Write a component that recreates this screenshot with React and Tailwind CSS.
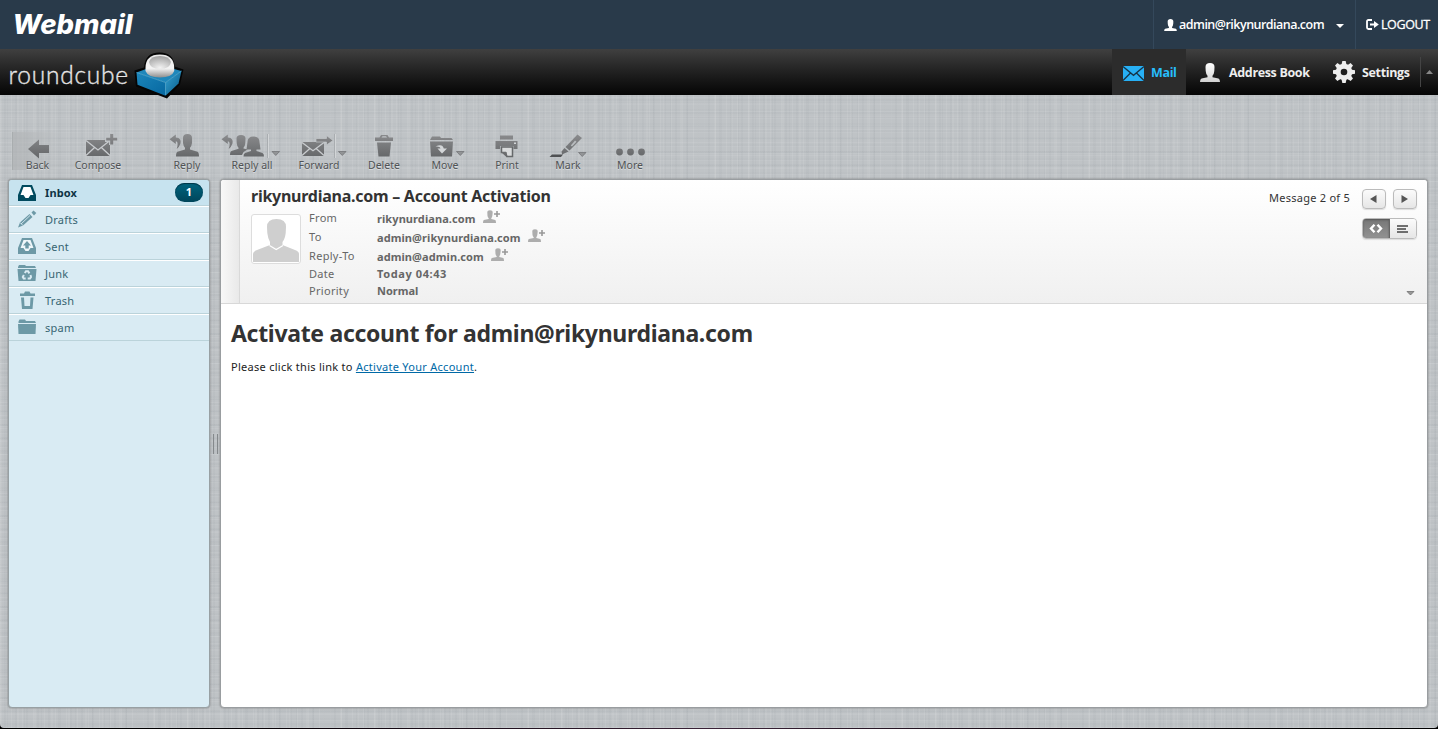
import React from "react";

const Glyph = ({ x, y, w, h, children, className = "" }) => (
  <svg width={w} height={h} viewBox={`${x} ${y} ${w} ${h}`} className={`block shrink-0 overflow-visible ${className}`}>
    {children}
  </svg>
);

const Caret = ({ x, y = 151 }) => (
  <path d={`M${x} ${y + 0.5}h7.500l-3.750 4z`} fill="#929496" stroke="#6d6f71" strokeWidth=".7" />
);

const Divider = ({ x }) => (
  <g>
    <path d={`M${x} 134v24`} stroke="#a9adb0" strokeWidth="1" />
    <path d={`M${x + 1} 134v24`} stroke="#d2d5d7" strokeWidth="1" />
  </g>
);

const Envelope = ({ x, y, w, h, line = "#c9cccf" }) => (
  <g>
    <rect x={x} y={y} width={w} height={h} />
    <path
      d={`M${x} ${y + 0.5}L${x + w / 2} ${y + h * 0.62}L${x + w} ${y + 0.5}M${x} ${y + h - 0.5}L${x + w * 0.37} ${y + h * 0.45}M${x + w} ${y + h - 0.5}L${x + w * 0.63} ${y + h * 0.45}`}
      fill="none" stroke={line} strokeWidth="1.3"
    />
  </g>
);

const ReplyArrow = ({ x }) => (
  <path transform={`translate(${x} 0)`} d="M0 139.3L6.3 134.5V137.6C10.5 137.8 12 140.5 10.8 144Q10 146.5 7.2 149C8.6 145 8.6 141.3 6.3 141.2V144z" />
);

const tools = [
  { label: "Back", x: 12, cls: "w-[50px]", w: 50, art: <path d="M28 149L39 139.5V145H49V153H39V158.500z" /> },
  {
    label: "Compose", x: 62, cls: "w-[72px]", w: 72,
    art: <g><Envelope x={86} y={140} w={24} h={16} /><path d="M105 136H109V133H114.500V136H118.500V142H114.500V145H109V142H105z" fill="#c0c4c7" /><path d="M110.200 134h3v3.700h4v2.800h-4v4h-3v-4h-4v-2.800h4z" /></g>,
  },
  {
    label: "Reply", x: 159, cls: "ml-[25px] w-[56px]", w: 56,
    art: <g><ReplyArrow x={169.5} /><path d="M183 138Q183 134 187.500 134T192 138L192 143Q191.500 146.500 190 147.800V149.500L197.500 151.800Q199 152.500 199 156.500H176Q176 152.500 177.500 151.800L185 149.500V147.800Q183.500 146.500 183 143z" /></g>,
  },
  {
    label: "Reply all", x: 215, cls: "w-[74px]", w: 74,
    art: <g><ReplyArrow x={221.5} /><path d="M236.500 138.500Q236.500 135 241 135T245.500 138.500L245.300 143Q245 146.500 243.500 147.800V148.500L247.500 149.500L243.500 152L242 155H230Q230 151.500 231.500 151L238.500 148.800V147.800Q237 146.500 236.700 143z" /><path d="M247.500 142Q247.500 136.500 253.500 136.500T259.500 142L260.500 149.500H256.500V151L262.500 153Q264 153.500 264 156.500H243.500Q243.500 153.500 245 153L251 151V149.500H246.500z" /><Divider x={267.5} /><Caret x={272} /></g>,
  },
  {
    label: "Forward", x: 289, cls: "w-[60px]", w: 60,
    art: <g><Envelope x={302} y={142} w={22} h={14} /><path d="M316 138.500H326.500V135.500L333 140.500L326.500 145V142H316z" stroke="#c3c7ca" strokeWidth=".7" /><Divider x={334.5} /><Caret x={338.500} /></g>,
  },
  {
    label: "Delete", x: 349, cls: "w-[70px]", w: 70,
    art: <g><path d="M375 137.500H379.500L381 135H387.500L389 137.500H393V141H375z" /><path d="M381.500 137.500L382.500 136.200H386L387 137.500z" fill="#c2c6c9" /><path d="M377 142.500H391L389.500 156.500H378.500z" /></g>,
  },
  {
    label: "Move", x: 419, cls: "w-[52px]", w: 52,
    art: <g><path d="M430 140L432 136.500H440L441 138H451.500L453 140z" /><path d="M430 141.500H453L452 156.500H431z" /><path d="M435.500 146.500Q442.500 143 443.800 148.500H447L442 153.500L437.500 148.500H440.500Q440 146 435.500 146.500z" fill="#d3d6d8" /><Caret x={456.500} /></g>,
  },
  {
    label: "Print", x: 471, cls: "w-[72px]", w: 72,
    art: <g><path d="M500 135.500H513V139.500H500z" /><path d="M495.500 141H517.500V149H513.500V146H500V149H495.500z" /><path d="M501.500 147H512.500V156.500H507L505.500 152.500H501.500z" fill="#d9dbdc" stroke="#66686a" strokeWidth="1.500" /><path d="M501 152L507 157.500L506.500 152z" /><path d="M514 142.500h2v1.500h-2z" fill="#d2d5d7" /></g>,
  },
  {
    label: "Mark", x: 543, cls: "w-[50px]", w: 50,
    art: <g><path d="M577.500 134.500L582 138L569.500 150.500L565.500 147z" /><path d="M575 140.500l1.500 1.200-4.500 4.800-1.200-1z" fill="#b9bdc0" /><path d="M564.500 148L568.500 151.500L562 154.500L561.500 151.500z" /><path d="M552 154.500H563L561 157H549.500z" fill="#4f5153" /><Caret x={578.500} y={152} /></g>,
  },
  { label: "More", x: 593, cls: "w-[74px]", w: 74, art: <g><circle cx="619.500" cy="152" r="3.400" /><circle cx="630.500" cy="152" r="3.400" /><circle cx="641.500" cy="152" r="3.400" /></g> },
];

function Toolbar() {
  return (
    <div className="flex h-[84px] pt-[37px] pl-3">
      {tools.map((t) => (
        <div key={t.label} className={`flex shrink-0 flex-col items-center ${t.cls} ${t.label === "Back" ? "h-[38px] border-l border-[#a9adaf] bg-linear-to-r from-[#b0b3b5]/70 to-transparent" : ""}`}>
          <Glyph x={t.x} y={132} w={t.w} h={26} className={t.label === "Back" ? "-ml-px" : ""}>
            <g fill="url(#toolFill)">{t.art}</g>
          </Glyph>
          <span className="text-[10.500px] leading-[14px] whitespace-nowrap text-[#505355] [text-shadow:0_1px_0_#d9dcde]">{t.label}</span>
        </div>
      ))}
    </div>
  );
}

const folderArt = {
  Inbox: <path fillRule="evenodd" d="M4 1H14L18 11V17H0V11zM5.500 3L2.500 11H5.500L7.500 14H10.500L12.500 11H15.500L12.500 3z" />,
  Drafts: <g><path d="M13.500 2.500L15.500 0.500L18.300 3L16 5.500z" /><path d="M11.500 4L14.500 7L5 15.500L0 17.500L2 12.500z" /><path d="M3 14L12 5.500M2 12.500L5 15.500" stroke="#d9ebf3" strokeWidth=".9" /></g>,
  Sent: <g><path fillRule="evenodd" d="M4 1H14L18 11V17H0V11zM5.500 3L2.500 11H5.500L7.500 14H10.500L12.500 11H15.500L12.500 3z" /><path d="M9 4L13 8.500H10.700V11.500H7.300V8.500H5z" /></g>,
  Junk: <g><path d="M0 3L1 1H7L8 2H17L18 4H0zM-.5 5H18.500L17.500 17H.5z" /><g fill="none" stroke="#d9ebf3" strokeWidth="2"><path d="M6.800 9L8 7.200H10L11.400 9.400M12.500 11L13 13L12 14.600H9.700M7.700 14.600H5.700L4.800 13L5.900 11" /></g></g>,
  Trash: <g><path d="M2 2.500H6L7 .5H11.500L12.500 2.500H17V5H2z" /><path fillRule="evenodd" d="M3 6.500H6L6.500 15H12L12.500 6.500H15.500L14.500 18H4z" /></g>,
  spam: <g><path d="M.5 3.500L1.500 1.500H7L8 3H17L18 5H.5z" /><path d="M0 6H18L17.500 16H.5z" /></g>,
};

function Folders() {
  return (
    <aside className="flex h-[529px] w-[202px] shrink-0 flex-col rounded-[4px] border border-[#98a0a3] bg-[#d9ebf3] shadow-[0_0_2px_#777]">
      {Object.keys(folderArt).map((name, i) => (
        <div
          key={name}
          className={`flex shrink-0 items-center border-b border-b-[#bbd3da] pr-[6px] pl-[9px] text-[11px] ${i === 0 ? "h-[26px] rounded-t-[3px] bg-[#c7e3ef] font-bold tracking-[0.1px] text-[#0e3445]" : "h-[27px] border-t border-t-white tracking-[0.25px] text-[#376572]"}`}
        >
          <Glyph x={0} y={0} w={18} h={18} className={i === 0 ? "text-[#014a5e]" : "-mt-px text-[#6d99a6]"}>
            {i < 3 && i !== 1 && <path d="M5 3H13L15.500 11L12.500 14H5.500L2.500 11z" fill="#fff" opacity={i ? 0.6 : 1} />}
            <g fill="currentColor">{folderArt[name]}</g>
          </Glyph>
          <span className="mt-[2px] ml-[9px]">{name}</span>
          {i === 0 && (
            <span className="ml-auto flex h-[19px] w-7 items-center justify-center rounded-full bg-linear-to-b from-[#00657f] to-[#00455a] text-white shadow-[inset_0_1px_1px_#003648]">1</span>
          )}
        </div>
      ))}
    </aside>
  );
}

const AddContact = () => (
  <Glyph x={0} y={0} w={18} h={14} className="mt-[-3px]">
    <path d="M4.300 2.500Q4.300 .3 7 .3T9.700 2.500L9.300 6Q9 7.500 8.300 8.300V9L12.300 10Q13 10.500 13 13H0Q0 10.500 .8 10L5.700 9V8.300Q4.800 7.500 4.500 6z" fill="#adadad" />
    <path d="M13.200 1h1.600v2.200h2.200v1.600h-2.200v2.200h-1.600V4.800H11V3.200h2.200z" fill="#999" />
  </Glyph>
);

const headers = [
  ["From", "rikynurdiana.com", true, "h-[19px] tracking-[0.08px]"],
  ["To", "admin@rikynurdiana.com", true, "h-[19px] tracking-[0.08px]"],
  ["Reply-To", "admin@admin.com", true, "h-[19px] tracking-[0.08px]"],
  ["Date", "Today 04:43", false, "h-[17px] tracking-[0.6px]"],
  ["Priority", "Normal", false, "h-[17px]"],
];

function PageButton({ d }) {
  return (
    <button className="flex h-[20px] w-[24px] items-center justify-center rounded-[4px] border border-[#bbb] bg-linear-to-b from-[#fbfbfb] to-[#e6e6e6] pr-[2px] shadow-[0_1px_1px_#ddd]">
      <svg width="7" height="8" viewBox="0 0 7 8"><path d={d} fill="#555" /></svg>
    </button>
  );
}

function Message() {
  return (
    <main className="flex h-[529px] w-[1208px] shrink-0 flex-col rounded-[4px] border border-[#999da0] bg-white shadow-[0_0_2px_#777]">
      <header className="flex h-[124px] shrink-0 rounded-t-[3px] border-b border-[#d8d8d8] bg-linear-to-b from-white to-[#f0f0f0]">
        <div className="w-[19px] shrink-0 rounded-tl-[3px] border-r border-[#d9d9d9] bg-linear-to-r from-[#f8f8f8] to-[#e9e9e9]" />
        <div className="flex grow flex-col pl-[11px]">
          <h2 className="mt-[6px] h-5 text-[16px] leading-5 font-bold tracking-[-0.26px] text-[#333]">rikynurdiana.com – Account Activation</h2>
          <div className="mt-px flex">
            <div className="mt-[7px] h-[50px] w-[50px] rounded-[3px] border border-[#ddd] bg-white">
              <Glyph x={0} y={0} w={48} h={48}>
                <path d="M15 12Q15 4 24.500 4T34 12L33.700 18Q33 24 30.500 27V30L43 35Q47 36.500 47 39V47H1V39Q1 36.500 5 35L18 30V27Q16 24 15.300 18z" fill="#cfcfcf" />
                <path d="M17.500 30.500L24.200 34.500L31 30.500" fill="none" stroke="#fff" strokeWidth="1.200" />
              </Glyph>
            </div>
            <div className="ml-2 flex flex-col pt-[2px] text-[11px] text-[#666]">
              {headers.map(([k, v, add, cls]) => (
                <div key={k} className={`flex items-center ${cls}`}>
                  <span className="w-[68px] tracking-[0.3px]">{k}</span>
                  <b className={add ? "mt-px mr-[7px]" : ""}>{v}</b>
                  {add && <AddContact />}
                </div>
              ))}
            </div>
          </div>
        </div>
        <div className="flex w-[170px] flex-col items-end pt-[9px] pr-[10px]">
          <div className="flex items-center">
            <span className="-mt-px mr-3 text-[11px] tracking-[0.25px] whitespace-nowrap text-[#333]">Message 2 of 5</span>
            <PageButton d="M6.500 0V8L0 4z" />
            <span className="w-[7px]" />
            <PageButton d="M.5 0V8L7 4z" />
          </div>
          <div className="mt-[9px] flex h-[21px] w-[55px] overflow-hidden rounded-[4px] border border-[#bbb] shadow-[0_1px_1px_#ddd]">
            <span className="flex w-[27px] items-center justify-center border-r border-[#666] bg-linear-to-b from-[#777] to-[#929292] shadow-[inset_0_1px_2px_#555]">
              <svg width="14" height="9" viewBox="0 0 14 9" fill="none" stroke="#fff" strokeWidth="2.400"><path d="M5.500 .8L2 4.500L5.500 8.200M8.500 .8L12 4.500L8.500 8.200" /></svg>
            </span>
            <span className="flex grow items-center justify-center bg-linear-to-b from-[#fbfbfb] to-[#e6e6e6]">
              <svg width="12" height="8" viewBox="0 0 12 8" stroke="#444" strokeWidth="1.600"><path d="M0 1H11M0 4H9M0 7H11" /></svg>
            </span>
          </div>
          <svg className="mt-[52px] mr-[2px]" width="9" height="5" viewBox="0 0 9 5"><path d="M1 .5H8L4.500 4z" fill="#999" stroke="#666" strokeWidth=".7" /></svg>
        </div>
      </header>
      <article className="px-[10px] pt-[13px] text-[#333]">
        <h1 className="text-[23px] leading-[32px] font-bold tracking-[-0.31px] whitespace-nowrap">Activate account for admin@rikynurdiana.com</h1>
        <p className="mt-[10px] text-[11px] leading-[16px] tracking-[0.28px] text-[#222]">
          Please click this link to <a href="#" className="text-[#0069a6] underline">Activate Your Account</a>.
        </p>
      </article>
    </main>
  );
}

const person = "M5.500 4Q5.500 0 10 0T14.500 4L14.300 8Q14 11.500 12.500 12.800V14.300L18.500 15.500Q20 16 20 19H0Q0 16 1.500 15.500L7.500 14.300V12.800Q6 11.500 5.700 8z";

export default function App() {
  return (
    <div className="flex h-[729px] w-[1438px] flex-col overflow-hidden bg-black font-['Noto_Sans','Open_Sans',sans-serif]">
      <svg width="0" height="0" className="absolute">
        <defs>
          <linearGradient id="toolFill" x1="0" y1="134" x2="0" y2="158" gradientUnits="userSpaceOnUse"><stop stopColor="#8b8c8e" /><stop offset="1" stopColor="#646668" /></linearGradient>
          <linearGradient id="navFill" x1="0" y1="0" x2="0" y2="1"><stop stopColor="#fff" /><stop offset="1" stopColor="#d2d2d2" /></linearGradient>
        </defs>
      </svg>

      <div className="flex h-[49px] shrink-0 items-stretch bg-[#293a4a] font-['Open_Sans',sans-serif] text-[12.500px] text-white">
        <svg width="140" height="49" viewBox="0 0 140 49">
          <text x="12.500" y="34" textLength="120" lengthAdjust="spacingAndGlyphs" fontFamily="Inter, sans-serif" fontStyle="italic" fontWeight="800" fontSize="26.500" fill="#fff">Webmail</text>
        </svg>
        <div className="ml-auto flex w-[202px] items-center border-l border-[#34485b] pl-[10px]">
          <svg width="13" height="12" viewBox="0 0 20 19"><path d={person} fill="#fff" /></svg>
          <span className="mt-px ml-[2px] w-[145px] shrink-0 font-semibold tracking-[-0.52px] whitespace-nowrap">admin@rikynurdiana.com</span>
          <svg className="mt-[2px] ml-[12px] shrink-0" width="8" height="4" viewBox="0 0 8 4"><path d="M0 0H8L4 4z" fill="#fff" /></svg>
        </div>
        <div className="flex w-[83px] items-center border-l border-[#34485b] pl-[10px]">
          <svg width="13" height="11" viewBox="0 0 13 11" fill="none" stroke="#fff" strokeWidth="1.800"><path d="M6 1H2.500Q1 1 1 2.500V8.500Q1 10 2.500 10H6M4 5.500H9" /><path d="M8 2L12.800 5.500L8 9z" fill="#fff" stroke="none" /></svg>
          <span className="mt-px ml-[2px] tracking-[-0.4px] [-webkit-text-stroke:0.3px_white]">LOGOUT</span>
        </div>
      </div>

      <div className="flex h-[46px] shrink-0 items-stretch bg-linear-to-b from-[#404040] to-[#060606] font-['Open_Sans',sans-serif] text-[12.500px] font-bold tracking-[-0.35px] text-[#eee]">
        <svg width="190" height="46" viewBox="0 49 190 46" className="relative z-10 overflow-visible">
          <defs>
            <linearGradient id="word" x1="0" y1="0" x2="0" y2="1"><stop stopColor="#fff" /><stop offset="1" stopColor="#ccc" /></linearGradient>
            <linearGradient id="ball" x1="0" y1="0" x2="0" y2="1"><stop stopColor="#e9e9e9" /><stop offset=".6" stopColor="#f4f4f4" /><stop offset="1" stopColor="#8e8e8e" /></linearGradient>
            <radialGradient id="dip" cx=".5" cy=".9" r=".9"><stop stopColor="#f2f2f2" /><stop offset="1" stopColor="#9f9f9f" /></radialGradient>
            <linearGradient id="cubeLeft" x1="0" y1="0" x2="1" y2="1"><stop stopColor="#1c86bb" /><stop offset="1" stopColor="#0667a0" /></linearGradient>
            <linearGradient id="cubeRight" x1="0" y1="0" x2="1" y2="1"><stop stopColor="#36a3d4" /><stop offset="1" stopColor="#045785" /></linearGradient>
          </defs>
          <text x="8.500" y="84" textLength="119.500" lengthAdjust="spacing" fontFamily="Lato, sans-serif" fontSize="24.500" fontWeight="300" letterSpacing="0" fill="url(#word)" stroke="#e8e8e8" strokeWidth=".35">roundcube</text>
          <path d="M134.500 70.500L144 67.500Q145 52.500 159.500 52.500T174.500 66.500L183.500 69.500L180 84.500L167 98.500L136 86.500z" fill="#050505" />
          <path d="M136.500 72.500L146 69H174L181.500 71L165.500 82.500z" fill="#1f87bb" />
          <path d="M136.500 72.500L165.500 82.500V95.800L137.500 84.800z" fill="url(#cubeLeft)" />
          <path d="M165.500 82.500L181.500 71L178.500 83.500L165.500 95.800z" fill="url(#cubeRight)" />
          <path d="M136.500 72.500L165.500 82.500L181.500 71M165.500 82.500V95" fill="none" stroke="#5bb5dd" strokeWidth=".7" />
          <path d="M145.500 68Q145.500 54.500 159.800 54.500T174.200 68V71Q172 77.500 160 77.500T145.500 71z" fill="url(#ball)" />
          <path d="M149 62Q150.500 56 160 56T171 62Q170 69 160 69T149 62z" fill="url(#dip)" />
        </svg>
        <nav className="ml-auto flex">
          <div className="flex w-[74px] items-center bg-[#2c2c2c] pl-[11px] text-[#27bdfb]">
            <Glyph x={0} y={0} w={21} h={15} className="mt-[2px]"><g fill="#27b0f5"><Envelope x={0} y={0} w={21} h={15} line="#163347" /></g></Glyph>
            <span className="mt-[3px] ml-[7px]">Mail</span>
          </div>
          <div className="flex w-[134px] items-center pl-[14px]">
            <svg width="20" height="19" viewBox="0 0 20 19"><path d={person} fill="url(#navFill)" /></svg>
            <span className="mt-[3px] ml-[9px] whitespace-nowrap">Address Book</span>
          </div>
          <div className="flex w-[100px] items-center pl-[13px]">
            <svg width="22" height="22" viewBox="-11 -11 22 22">
              <g fill="#eee">
                {[0, 45, 90, 135].map((a) => <path key={a} d="M-2.300-8L-1.700-11H1.700L2.300-8V8L1.700 11H-1.700L-2.300 8z" transform={`rotate(${a})`} />)}
                <circle r="8.300" />
              </g>
              <circle r="3.300" fill="#202020" />
            </svg>
            <span className="mt-[3px] ml-[7px]">Settings</span>
          </div>
          <div className="my-2 flex w-[18px] items-center justify-center border-l border-[#444]">
            <svg width="7" height="4" viewBox="0 0 7 4"><path d="M0 4H7L3.500 0z" fill="#888" /></svg>
          </div>
        </nav>
      </div>

      <div className="h-[633px] shrink-0 rounded-b-[4px] bg-[#bfc3c6] [background-image:repeating-linear-gradient(90deg,rgba(255,255,255,0.08)_0_1px,transparent_1px_4px,rgba(70,80,90,0.03)_4px_6px,transparent_6px_11px),repeating-linear-gradient(90deg,rgba(255,255,255,0.06)_0_2px,transparent_2px_7px,rgba(70,80,90,0.03)_7px_8px,transparent_8px_17px),repeating-linear-gradient(0deg,rgba(255,255,255,0.07)_0_1px,transparent_1px_3px,rgba(70,80,90,0.03)_3px_5px,transparent_5px_13px),repeating-linear-gradient(0deg,rgba(255,255,255,0.05)_0_1px,rgba(70,80,90,0.02)_1px_3px,transparent_3px_7px)]">
        <Toolbar />
        <div className="flex pl-2">
          <Folders />
          <div className="flex h-[529px] w-[10px] items-center justify-center gap-[3px]">
            <span className="h-5 w-px bg-[#85898c]" />
            <span className="h-5 w-px bg-[#85898c]" />
          </div>
          <Message />
        </div>
      </div>
      <div className="h-px shrink-0 bg-linear-to-r from-black via-[#3b2338] to-black" />
    </div>
  );
}
